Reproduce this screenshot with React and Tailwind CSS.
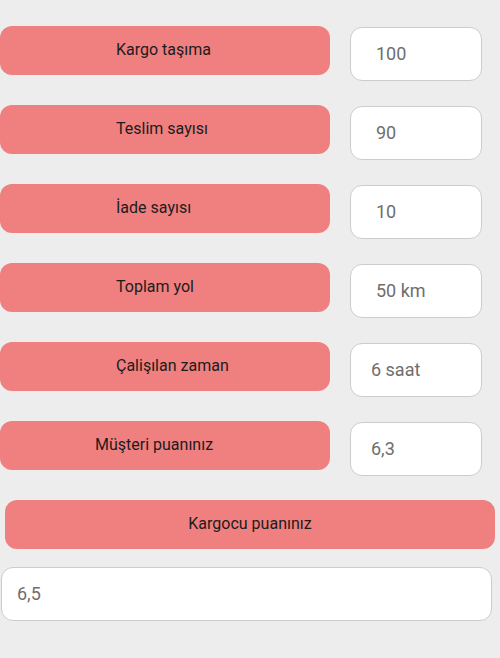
import { useState } from "react";

const rows = [
    { label: "Kargo taşıma", value: "100", labelPad: "pl-[116px]", valuePad: "pl-[25px]" },
    { label: "Teslim sayısı", value: "90", labelPad: "pl-[116px]", valuePad: "pl-[25px]" },
    { label: "İade sayısı", value: "10", labelPad: "pl-[116px]", valuePad: "pl-[25px]" },
    { label: "Toplam yol", value: "50 km", labelPad: "pl-[116px]", valuePad: "pl-[25px]" },
    { label: "Çalişılan zaman", value: "6 saat", labelPad: "pl-[116px]", valuePad: "pl-[20px]" },
    { label: "Müşteri puanınız", value: "6,3", labelPad: "pl-[95px]", valuePad: "pl-[20px]" },
];

export default function App() {
    const [score, setScore] = useState("6,5");

    return (
        <div className="min-h-[658px] w-[500px] bg-[#ededed] pt-[26px] font-['Roboto',sans-serif]">
            {/* Stat rows */}
            {rows.map((row) => (
                <div key={row.label} className="flex items-start gap-[20px] mb-[24px]">
                    <button
                        type="button"
                        className={`h-[49px] w-[330px] rounded-[12px] bg-[#f08080] text-left text-[16px] text-[#1c1c1c] pb-[2px] ${row.labelPad}`}
                    >
                        {row.label}
                    </button>
                    <input
                        type="text"
                        defaultValue={row.value}
                        className={`mt-[1px] h-[54px] w-[132px] rounded-[12px] border border-[#cccccc] bg-white pb-[2px] text-[18px] text-[#6e6e6e] outline-none ${row.valuePad}`}
                    />
                </div>
            ))}

            {/* Result */}
            <button
                type="button"
                className="mx-[5px] h-[49px] w-[490px] rounded-[12px] bg-[#f08080] text-center text-[16px] text-[#1c1c1c] pb-[2px]"
            >
                Kargocu puanınız
            </button>
            <input
                type="text"
                value={score}
                onChange={(e) => setScore(e.target.value)}
                className="mt-[18px] ml-[1px] block h-[54px] w-[491px] rounded-[12px] border border-[#cccccc] bg-white pb-[2px] pl-[15px] text-[18px] text-[#6e6e6e] outline-none"
            />
        </div>
    );
}
